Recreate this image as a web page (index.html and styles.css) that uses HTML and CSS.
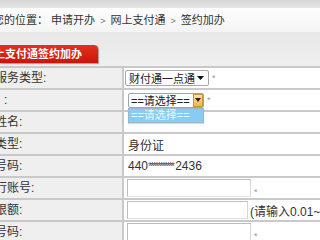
FILE: index.html
```html
<!DOCTYPE html>
<html lang="zh-CN">
<head>
  <meta charset="UTF-8" />
  <title>签约加办</title>
  <link rel="stylesheet" href="styles.css">
</head>
<body>
  <div class="page">
    <div class="topbar"></div>
    <div class="crumbs">您的位置： 申请开办 <span class="sep">&gt;</span> 网上支付通 <span class="sep">&gt;</span> 签约加办</div>

    <div class="tabbar">
      <div class="tab">网上支付通签约加办</div>
    </div>

    <div class="form">
      <div class="row">
        <div class="label">服务类型:</div>
        <div class="value">
          <div class="select select-main">
            <span>财付通一点通</span>
            <svg class="caret" width="7" height="4" viewBox="0 0 7 4"><path d="M0 0h7L3.5 4z" fill="#111"/></svg>
          </div>
          <span class="req">*</span>
        </div>
      </div>

      <div class="row">
        <div class="label label-colon">:</div>
        <div class="value">
          <div class="select select-open">
            <span>==请选择==</span>
            <div class="drop-btn">
              <svg width="6" height="4" viewBox="0 0 6 4"><path d="M0 0h6L3 4z" fill="#222"/></svg>
            </div>
          </div>
          <span class="req">*</span>
          <div class="drop-list">==请选择==</div>
        </div>
      </div>

      <div class="row">
        <div class="label">姓名:</div>
        <div class="value"></div>
      </div>

      <div class="row">
        <div class="label">类型:</div>
        <div class="value"><span class="text">身份证</span></div>
      </div>

      <div class="row">
        <div class="label">号码:</div>
        <div class="value"><span class="text">440<span class="stars">***********</span>2436</span></div>
      </div>

      <div class="row">
        <div class="label">行账号:</div>
        <div class="value">
          <div class="input"></div>
          <span class="req req-low">*</span>
        </div>
      </div>

      <div class="row">
        <div class="label">限额:</div>
        <div class="value">
          <div class="input input-short"></div>
          <span class="hint">(请输入0.01~50000之间的金额)</span>
        </div>
      </div>

      <div class="row">
        <div class="label">号码:</div>
        <div class="value">
          <div class="input"></div>
          <span class="req req-low">*</span>
        </div>
      </div>
    </div>
  </div>
</body>
</html>
```

FILE: styles.css
```css
body {
  margin: 0;
  font-family: "Liberation Sans", "Noto Sans CJK SC", sans-serif;
  color: #333;
  background: #ececec;
}

.page {
  width: 320px;
  height: 240px;
  overflow: hidden;
}

.topbar {
  height: 8px;
  background: linear-gradient(#d6d6d6, #e6e6e6);
}

.crumbs {
  height: 24px;
  line-height: 24px;
  font-size: 11px;
  white-space: nowrap;
  text-indent: -7px;
  background: linear-gradient(#fdfdfd, #f4f4f4);
  color: #333;
}

.crumbs .sep {
  color: #777;
  font-size: 9px;
  padding: 0 2px;
}

.tabbar {
  height: 34px;
  padding-top: 13px;
  box-sizing: border-box;
  background: linear-gradient(#e8e8e8, #efefef);
}

.tab {
  width: 98px;
  height: 18px;
  line-height: 18px;
  font-size: 11px;
  font-weight: bold;
  color: #fff;
  white-space: nowrap;
  overflow: hidden;
  text-indent: -17px;
  background: linear-gradient(#e4321f, #c5170d);
  border-radius: 0 4px 0 0;
  box-shadow: 1px 1px 1px rgba(120, 0, 0, 0.4);
}

.form {
  border-top: 2px solid #c9c9c9;
  background: #fff;
}

.row {
  display: flex;
  height: 20px;
  border-bottom: 2px solid #c9c9c9;
}

.label {
  width: 122px;
  flex-shrink: 0;
  background: #efefef;
  border-right: 2px solid #c9c9c9;
  font-size: 12px;
  line-height: 20px;
  white-space: nowrap;
  overflow: hidden;
  text-indent: -5px;
}

.label-colon {
  text-indent: 4px;
}

.value {
  flex: 1;
  position: relative;
  display: flex;
  align-items: center;
  gap: 3px;
  padding-left: 3px;
  font-size: 12px;
  white-space: nowrap;
}

.text {
  padding-left: 1px;
  color: #333;
}

.stars {
  letter-spacing: -2px;
  font-size: 11px;
  color: #555;
  margin-right: 2px;
}

.select {
  display: flex;
  align-items: center;
  justify-content: space-between;
  box-sizing: border-box;
  border: 1px solid #a8a8a8;
  border-radius: 2px;
  background: #fff;
  font-size: 11px;
  color: #222;
  overflow: hidden;
}

.select-main {
  width: 84px;
  height: 16px;
  margin-left: -2px;
  padding: 0 4px 0 3px;
}

.select-open {
  width: 76px;
  height: 15px;
  margin-left: 1px;
  padding-left: 2px;
  border-color: #9aa7b4;
}

.drop-btn {
  width: 10px;
  height: 13px;
  flex-shrink: 0;
  display: flex;
  align-items: center;
  justify-content: center;
  box-sizing: border-box;
  border: 1px solid #c99436;
  background: linear-gradient(#fde2a2, #f0b550);
}

.drop-list {
  position: absolute;
  left: 4px;
  top: 18px;
  width: 76px;
  height: 15px;
  box-sizing: border-box;
  border: 1px solid #9fb6c6;
  background: #86cdf1;
  color: #eaf7ff;
  font-size: 11px;
  line-height: 13px;
  padding-left: 2px;
  box-shadow: 0 1px 1px rgba(0, 0, 0, 0.15);
}

.req {
  font-size: 9px;
  color: #999;
}

.req-low {
  align-self: flex-end;
  margin-bottom: 1px;
}

.input {
  width: 124px;
  height: 18px;
  box-sizing: border-box;
  border: 1px solid #bdbdbd;
  border-right-color: #d6d6d6;
  border-bottom-color: #e0e0e0;
  background: #fff;
}

.input-short {
  width: 121px;
}

.hint {
  font-size: 12px;
  color: #333;
  margin-left: -1px;
}
```
